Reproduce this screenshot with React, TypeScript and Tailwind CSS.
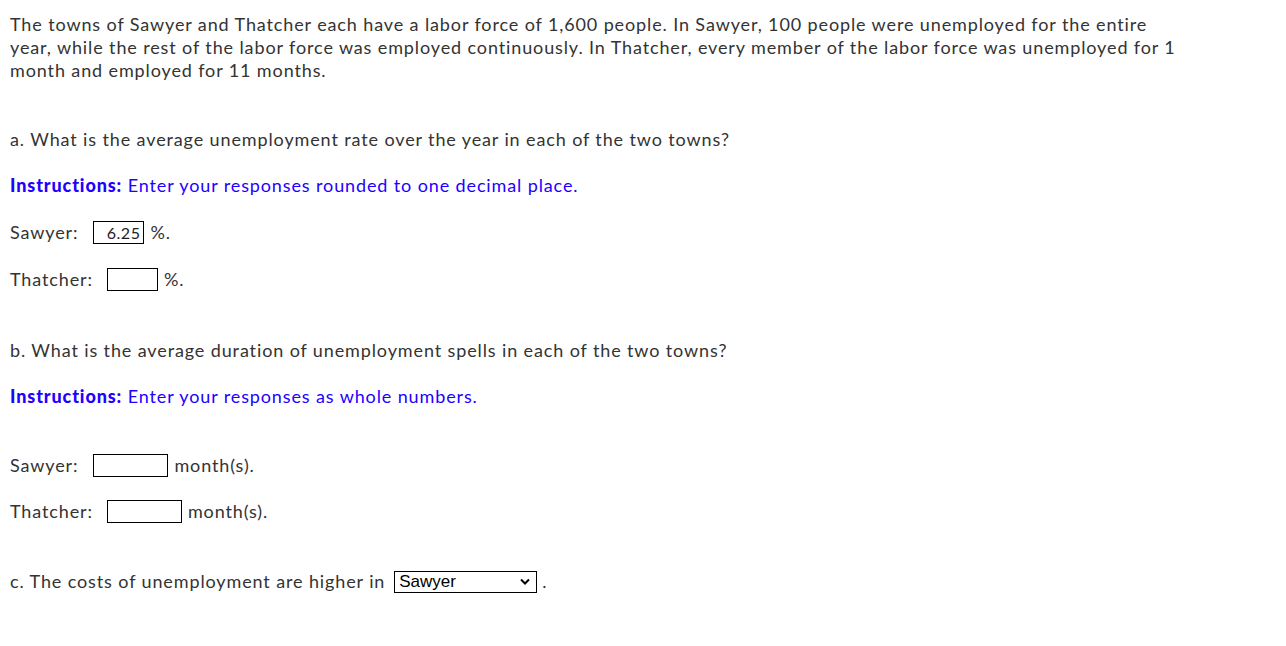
import React from 'react';

const font = { fontFamily: 'Lato, "Open Sans", sans-serif' };

function Box({ w, value }: { w: number; value?: string }) {
  return (
    <input
      readOnly
      value={value ?? ''}
      className={`h-[23px] border border-black bg-white px-[3px] text-right text-[16px] leading-[21px] tracking-[0.5px] text-[#222] outline-none ${
        w === 50 ? 'w-[51px]' : 'w-[75px]'
      }`}
      style={font}
    />
  );
}

export default function App() {
  return (
    <div
      className="min-h-screen bg-white px-[10px] pt-[13px] text-[18px] leading-[23px] tracking-[0.88px] text-[#333]"
      style={font}
    >
      <p>
        The towns of Sawyer and Thatcher each have a labor force of 1,600 people. In Sawyer, 100 people were unemployed for the entire
        <br />
        year, while the rest of the labor force was employed continuously. In Thatcher, every member of the labor force was unemployed for 1
        <br />
        month and employed for 11 months.
      </p>

      <p className="mt-[46px]">a. What is the average unemployment rate over the year in each of the two towns?</p>
      <p className="mt-[23px] text-[#2200ff]">
        <span className="font-black">Instructions:</span> Enter your responses rounded to one decimal place.
      </p>

      <div className="mt-[24px] flex h-[23px] items-center">
        <span>Sawyer:</span>
        <span className="ml-[15px] flex"><Box w={50} value="6.25" /></span>
        <span className="ml-[6px]">%.</span>
      </div>
      <div className="mt-[24px] flex h-[23px] items-center">
        <span>Thatcher:</span>
        <span className="ml-[14px] flex"><Box w={50} /></span>
        <span className="ml-[6px]">%.</span>
      </div>

      <p className="mt-[48px]">b. What is the average duration of unemployment spells in each of the two towns?</p>
      <p className="mt-[23px] text-[#2200ff]">
        <span className="font-black">Instructions:</span> Enter your responses as whole numbers.
      </p>

      <div className="mt-[46px] flex h-[23px] items-center">
        <span>Sawyer:</span>
        <span className="ml-[15px] flex"><Box w={75} /></span>
        <span className="ml-[6px]">month(s).</span>
      </div>
      <div className="mt-[23px] flex h-[23px] items-center">
        <span>Thatcher:</span>
        <span className="ml-[14px] flex"><Box w={75} /></span>
        <span className="ml-[6px]">month(s).</span>
      </div>

      <div className="mt-[47px] flex h-[23px] items-center">
        <span>c. The costs of unemployment are higher in</span>
        <span className="relative ml-[9px] flex">
          <select
            defaultValue="Sawyer"
            className="h-[22px] w-[143px] appearance-none border border-black bg-white pl-[4px] text-[17px] leading-[20px] tracking-normal text-black outline-none"
            style={{ fontFamily: '"Liberation Sans", Arial, sans-serif' }}
          >
            <option>Sawyer</option>
            <option>Thatcher</option>
          </select>
          <svg className="pointer-events-none absolute right-[7px] top-[7px]" width="10" height="8" viewBox="0 0 10 8">
            <path d="M1 1.5 L5 5.5 L9 1.5" fill="none" stroke="#000" strokeWidth="2" />
          </svg>
        </span>
        <span className="ml-[5px]">.</span>
      </div>
    </div>
  );
}
